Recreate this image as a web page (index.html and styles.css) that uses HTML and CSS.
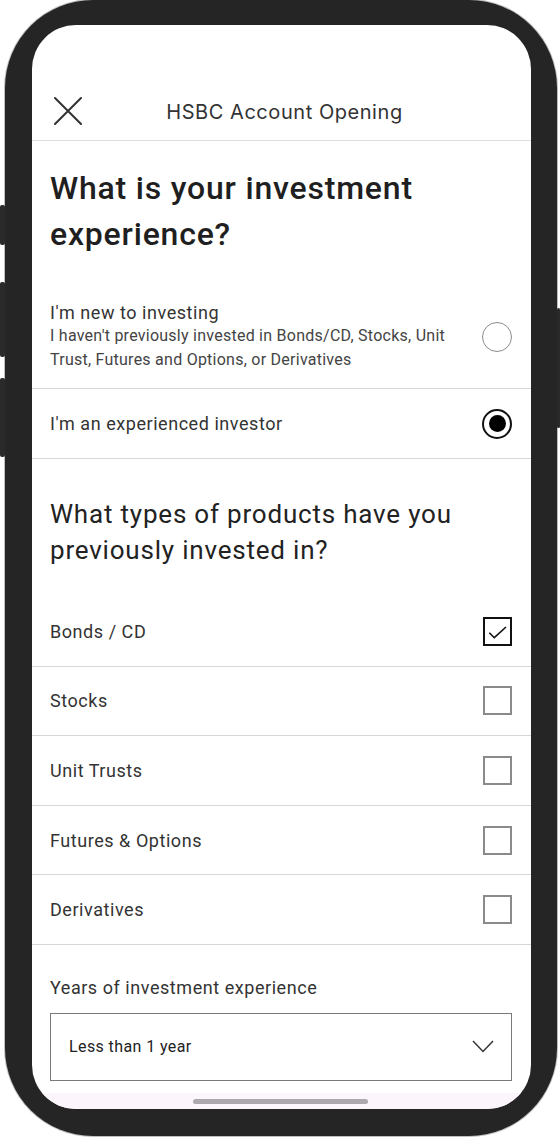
FILE: index.html
```html
<!DOCTYPE html>
<html lang="en">
<head>
<meta charset="utf-8">
<title>HSBC Account Opening</title>
<link rel="stylesheet" href="styles.css">
</head>
<body>
<div class="phone">
  <span class="btn btn-l1"></span>
  <span class="btn btn-l2"></span>
  <span class="btn btn-l3"></span>
  <span class="btn btn-r1"></span>
  <div class="screen">
    <div class="status"></div>
    <header class="nav">
      <svg class="close" width="28" height="28" viewBox="0 0 28 28" aria-hidden="true">
        <path d="M1 1 L27 27 M27 1 L1 27" stroke="#333" stroke-width="2" fill="none" stroke-linecap="round"/>
      </svg>
      <div class="nav-title">HSBC Account Opening</div>
    </header>
    <main class="content">
      <h1 class="q1">What is your investment experience?</h1>
      <div class="radio-row first">
        <div class="radio-text">
          <div class="opt-title">I'm new to investing</div>
          <div class="opt-sub">I haven't previously invested in Bonds/CD, Stocks, Unit Trust, Futures and Options, or Derivatives</div>
        </div>
        <span class="radio"></span>
      </div>
      <div class="radio-row">
        <div class="radio-text">
          <div class="opt-title">I'm an experienced investor</div>
        </div>
        <span class="radio checked"></span>
      </div>
      <h2 class="q2">What types of products have you previously invested in?</h2>
      <div class="checks">
        <div class="check-row"><span class="check-label">Bonds / CD</span>
          <span class="box checked"><svg width="25" height="25" viewBox="0 0 25 25" aria-hidden="true"><path d="M4.3 13.7 L9.3 18.7 L21 8" stroke="#111" stroke-width="1.6" fill="none"/></svg></span>
        </div>
        <div class="check-row"><span class="check-label">Stocks</span><span class="box"></span></div>
        <div class="check-row"><span class="check-label">Unit Trusts</span><span class="box"></span></div>
        <div class="check-row"><span class="check-label">Futures &amp; Options</span><span class="box"></span></div>
        <div class="check-row"><span class="check-label">Derivatives</span><span class="box"></span></div>
      </div>
      <div class="field">
        <div class="field-label">Years of investment experience</div>
        <div class="select">
          <span>Less than 1 year</span>
          <svg width="22" height="13" viewBox="0 0 22 13" aria-hidden="true"><path d="M1 1 L11 11.5 L21 1" stroke="#333" stroke-width="1.5" fill="none"/></svg>
        </div>
      </div>
    </main>
    <div class="home"><span class="home-bar"></span></div>
  </div>
</div>
</body>
</html>
```
FILE: styles.css
```css
* { box-sizing: border-box; }
html, body { margin: 0; padding: 0; background: #ffffff; }
body {
  width: 560px;
  height: 1137px;
  overflow: hidden;
  font-family: Roboto, "Liberation Sans", sans-serif;
}
.phone {
  position: relative;
  margin-left: 5px;
  width: 552px;
  height: 1136px;
  background: #252525;
  border-radius: 88px;
  padding: 25px 26px 27px 27px;
  box-shadow: 0 0 0 1px rgba(0,0,0,0.25);
}
.btn {
  position: absolute;
  background: #2a2a2a;
  width: 5px;
  border-radius: 2px;
}
.btn-l1 { left: -5px; top: 205px; height: 40px; }
.btn-l2 { left: -5px; top: 282px; height: 75px; }
.btn-l3 { left: -5px; top: 378px; height: 79px; }
.btn-r1 { right: -3px; width: 3px; top: 308px; height: 120px; }
.screen {
  width: 499px;
  height: 1084px;
  background: #fff;
  border-radius: 44px;
  overflow: hidden;
  display: flex;
  flex-direction: column;
}
.status { height: 59px; flex: none; }
.nav {
  flex: none;
  height: 57px;
  border-bottom: 1px solid #dedede;
  display: flex;
  align-items: center;
  justify-content: center;
  position: relative;
}
.close { position: absolute; left: 22px; top: 13px; }
.nav-title {
  font-family: Inter, "Liberation Sans", sans-serif;
  font-size: 20px;
  color: #333;
  padding-left: 6px;
  letter-spacing: 0.55px;
}
.content { flex: 1; overflow: hidden; }
.q1 {
  margin: 24px 18px 29px 18px;
  font-size: 32px;
  line-height: 46px;
  font-weight: 500;
  letter-spacing: 0.8px;
  color: #1f1f21;
}
.radio-row {
  display: flex;
  align-items: center;
  justify-content: space-between;
  padding: 0 19px 0 18px;
  height: 70px;
  border-bottom: 1px solid #d6d6da;
}
.radio-row.first { height: 103px; padding-top: 16px; padding-bottom: 16px; }
.opt-title { font-size: 18px; line-height: 22px; color: #333; letter-spacing: 0.55px; }
.opt-sub { font-size: 16px; line-height: 24px; color: #444; letter-spacing: 0.25px; }
.radio-text { padding-right: 20px; }
.radio {
  flex: none;
  width: 30px;
  height: 30px;
  border-radius: 50%;
  border: 1.5px solid #8c8c8c;
  display: flex;
  align-items: center;
  justify-content: center;
}
.radio.checked { border: 2.5px solid #111; }
.radio.checked::after {
  content: "";
  width: 17px;
  height: 17px;
  border-radius: 50%;
  background: #000;
}
.q2 {
  margin: 37px 18px 29px 18px;
  font-size: 26px;
  line-height: 36px;
  font-weight: 400;
  letter-spacing: 0.8px;
  color: #222;
}
.check-row {
  display: flex;
  align-items: center;
  justify-content: space-between;
  height: 69.6px;
  padding: 0 19px 0 18px;
  border-bottom: 1px solid #d6d6da;
}
.check-label { font-size: 18px; color: #333; letter-spacing: 0.55px; }
.box {
  width: 29px;
  height: 29px;
  border: 2px solid #8a8a8a;
  display: flex;
  align-items: center;
  justify-content: center;
}
.box.checked { border-color: #111; }
.field { padding: 32px 19px 0 18px; }
.field-label { font-size: 18px; line-height: 22px; color: #333; letter-spacing: 0.55px; }
.select {
  margin-top: 14px;
  height: 68px;
  border: 1px solid #7a7a7a;
  display: flex;
  align-items: center;
  justify-content: space-between;
  padding: 0 17px 0 18px;
  font-size: 16px;
  letter-spacing: 0.4px;
  color: #222;
}
.home {
  flex: none;
  height: 16px;
  background: #fcf5fc;
  display: flex;
  justify-content: center;
  padding-top: 6px;
}
.home-bar {
  width: 175px;
  height: 5px;
  border-radius: 3px;
  background: #aca8ae;
  margin-right: 2px;
}
```
